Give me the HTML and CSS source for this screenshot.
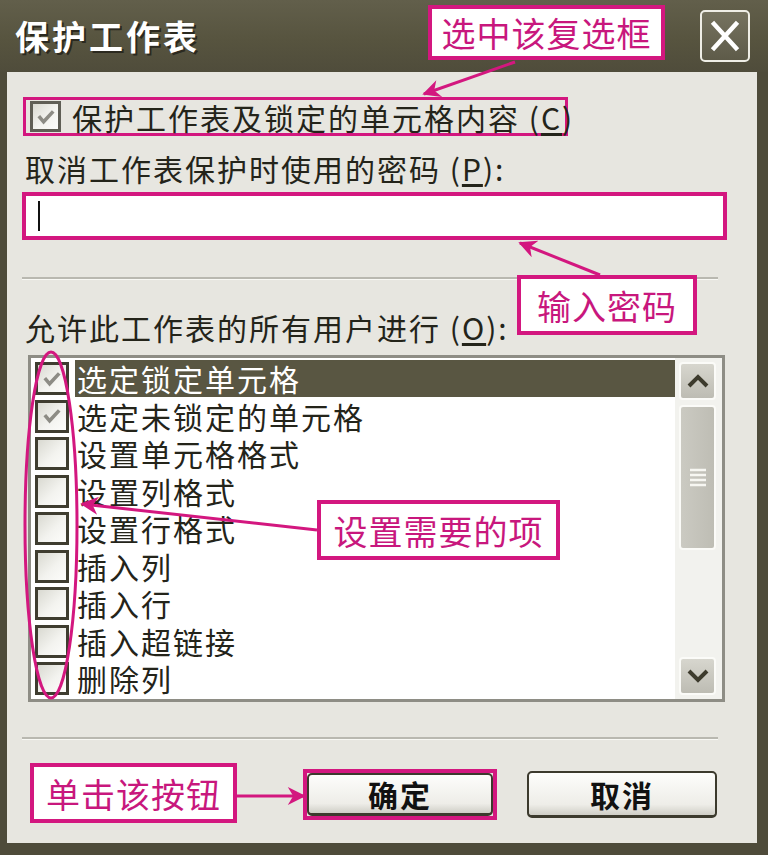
FILE: index.html
```html
<!DOCTYPE html>
<html lang="zh-CN">
<head>
<meta charset="utf-8">
<title>保护工作表</title>
<link rel="stylesheet" href="styles.css">
</head>
<body>
<div class="window">
  <div class="titlebar">
    <span class="title">保护工作表</span>
    <div class="close">
      <svg width="30" height="32" viewBox="0 0 30 32"><path d="M4 4 L26 28 M26 4 L4 28" stroke="#fff" stroke-width="4.5" stroke-linecap="square"/></svg>
    </div>
  </div>
  <div class="frame">
    <div class="body">
      <div class="check-row">
        <span class="cb small checked"><svg viewBox="0 0 30 30"><path d="M6 14 L12 21 L24 8" fill="none" stroke="#8d8c85" stroke-width="4.5"/></svg></span>
        <span class="label">保护工作表及锁定的单元格内容 (<u>C</u>)</span>
      </div>
      <div class="label pw-label">取消工作表保护时使用的密码 (<u>P</u>):</div>
      <div class="input"><span class="caret"></span></div>
      <div class="sep"></div>
      <div class="label allow-label">允许此工作表的所有用户进行 (<u>O</u>):</div>
      <div class="listbox">
        <div class="items">
          <div class="item"><span class="cb checked"><svg viewBox="0 0 30 30"><path d="M6 14 L12 21 L24 8" fill="none" stroke="#8d8c85" stroke-width="4.5"/></svg></span><span class="text sel">选定锁定单元格</span></div>
          <div class="item"><span class="cb checked"><svg viewBox="0 0 30 30"><path d="M6 14 L12 21 L24 8" fill="none" stroke="#8d8c85" stroke-width="4.5"/></svg></span><span class="text">选定未锁定的单元格</span></div>
          <div class="item"><span class="cb"></span><span class="text">设置单元格格式</span></div>
          <div class="item"><span class="cb"></span><span class="text">设置列格式</span></div>
          <div class="item"><span class="cb"></span><span class="text">设置行格式</span></div>
          <div class="item"><span class="cb"></span><span class="text">插入列</span></div>
          <div class="item"><span class="cb"></span><span class="text">插入行</span></div>
          <div class="item"><span class="cb"></span><span class="text">插入超链接</span></div>
          <div class="item"><span class="cb"></span><span class="text">删除列</span></div>
        </div>
        <div class="scrollbar">
          <div class="sb-btn"><svg width="26" height="20" viewBox="0 0 26 20"><path d="M4 15 L13 6 L22 15" fill="none" stroke="#3d3b2d" stroke-width="4"/></svg></div>
          <div class="track">
            <div class="thumb"><svg width="18" height="20" viewBox="0 0 18 20"><path d="M1 2 H17 M1 7 H17 M1 12 H17 M1 17 H17" stroke="#f7f7f2" stroke-width="2.5"/></svg></div>
          </div>
          <div class="sb-btn"><svg width="26" height="20" viewBox="0 0 26 20"><path d="M4 5 L13 14 L22 5" fill="none" stroke="#3d3b2d" stroke-width="4"/></svg></div>
        </div>
      </div>
      <div class="sep sep2"></div>
      <div class="buttons">
        <div class="ok-mark"><div class="btn">确定</div></div>
        <div class="btn cancel">取消</div>
      </div>
    </div>
  </div>

  <div class="callout c1">选中该复选框</div>
  <div class="callout c2">输入密码</div>
  <div class="callout c3">设置需要的项</div>
  <div class="callout c4">单击该按钮</div>

  <svg class="annot" width="768" height="855" viewBox="0 0 768 855">
    <defs>
      <marker id="ah" viewBox="0 0 10 10" refX="9" refY="5" markerWidth="7" markerHeight="6" orient="auto">
        <path d="M0 0 L10 5 L0 10 L3 5 Z" fill="#d3177f"/>
      </marker>
    </defs>
    <g stroke="#d3177f" stroke-width="3" fill="none">
      <line x1="515" y1="62" x2="424" y2="94" marker-end="url(#ah)"/>
      <line x1="600" y1="275" x2="520" y2="243" marker-end="url(#ah)"/>
      <line x1="317" y1="530" x2="82" y2="504" marker-end="url(#ah)"/>
      <line x1="237" y1="796" x2="304" y2="796" marker-end="url(#ah)"/>
      <ellipse cx="51" cy="525" rx="26" ry="173"/>
    </g>
  </svg>
</div>
</body>
</html>
```
FILE: styles.css
```css
* { box-sizing: border-box; }
html, body { margin: 0; padding: 0; }
body {
  width: 768px;
  height: 855px;
  overflow: hidden;
  background: #4e4b3a;
  font-family: "Noto Sans CJK SC", "Noto Sans", sans-serif;
}
.window {
  position: relative;
  width: 768px;
  height: 855px;
  background: #4e4b3a;
  display: flex;
  flex-direction: column;
}
.titlebar {
  height: 72px;
  flex: none;
  display: flex;
  align-items: center;
  justify-content: space-between;
  padding: 0 18px 0 15px;
  background: linear-gradient(#625f4b, #57543f 55%, #4f4c3b);
}
.title {
  color: #fff;
  font-size: 34px;
  font-weight: 700;
  letter-spacing: 3px;
  line-height: 1;
  text-shadow: 2px 2px 0 #2b291f;
}
.close {
  width: 50px;
  height: 52px;
  border: 2px solid #efeee6;
  border-radius: 5px;
  background: linear-gradient(#76735f, #5e5b49);
  display: flex;
  align-items: center;
  justify-content: center;
}
.frame {
  flex: 1;
  display: flex;
  padding: 0 11px 12px 7px;
}
.body {
  flex: 1;
  background: #e7e6e0;
  padding: 0 30px 0 15px;
  display: flex;
  flex-direction: column;
}
.label {
  font-size: 30px;
  line-height: 36px;
  letter-spacing: 2px;
  color: #24241a;
  white-space: nowrap;
}
.label u { text-underline-offset: 3px; }
.check-row {
  margin-top: 25px;
  margin-left: 1px;
  width: 545px;
  height: 39px;
  border: 3px solid #d3177f;
  display: flex;
  align-items: center;
  padding-left: 4px;
  gap: 11px;
}
.cb {
  flex: none;
  width: 34px;
  height: 33px;
  border: 3px solid #3f3d30;
  background: linear-gradient(135deg, #d9d9d1, #f3f3ef 55%, #fdfdfb);
  display: flex;
  align-items: center;
  justify-content: center;
}
.cb svg { width: 24px; height: 24px; }
.cb.small {
  width: 31px;
  height: 31px;
  border-color: #5f5e55;
}
.pw-label { margin-top: 14px; margin-left: 3px; }
.input {
  margin-top: 6px;
  height: 48px;
  border: 4px solid #d3177f;
  background: #fff;
  padding-left: 12px;
  display: flex;
  align-items: center;
}
.caret {
  width: 2px;
  height: 30px;
  background: #111;
}
.sep {
  margin-top: 37px;
  width: 696px;
  height: 3px;
  border-top: 2px solid #b9b8b0;
  border-bottom: 1px solid #f8f8f4;
}
.allow-label { margin-top: 29px; margin-left: 3px; }
.listbox {
  margin-top: 10px;
  margin-left: 6px;
  width: 697px;
  height: 347px;
  border: 3px solid #8e8d85;
  background: #fff;
  display: flex;
}
.items {
  flex: 1;
  padding: 2px 0 0 4px;
}
.item {
  height: 37.5px;
  display: flex;
  align-items: center;
  gap: 6px;
}
.text {
  flex: 1;
  height: 37px;
  line-height: 36px;
  padding-left: 2px;
  font-size: 30px;
  letter-spacing: 2px;
  color: #24241a;
  white-space: nowrap;
}
.text.sel {
  background: #595642;
  color: #fff;
}
.scrollbar {
  flex: none;
  width: 47px;
  padding: 4px 6px 4px 4px;
  background: #f2f2ee;
  display: flex;
  flex-direction: column;
}
.sb-btn {
  height: 38px;
  flex: none;
  border: 2px solid #fbfbf8;
  border-radius: 4px;
  background: linear-gradient(#d7d6ce, #bdbcb3);
  display: flex;
  align-items: center;
  justify-content: center;
}
.track { flex: 1; padding-top: 5px; }
.thumb {
  height: 145px;
  border: 2px solid #fbfbf8;
  border-radius: 4px;
  background: linear-gradient(90deg, #cbcac2, #bebdb4);
  display: flex;
  align-items: center;
  justify-content: center;
}
.sep2 { margin-top: 35px; }
.buttons {
  margin-top: 29px;
  display: flex;
  align-items: center;
}
.ok-mark {
  margin-left: 281px;
  width: 194px;
  height: 51px;
  border: 4px solid #d3177f;
}
.btn {
  width: 100%;
  height: 100%;
  border: 2px solid #3c3a2d;
  border-bottom-width: 3px;
  border-radius: 5px;
  background: linear-gradient(#fdfdfb, #eeede8 75%, #cfcec6);
  display: flex;
  align-items: center;
  justify-content: center;
  font-size: 30px;
  font-weight: 700;
  letter-spacing: 2px;
  color: #111;
}
.btn.cancel {
  margin-left: 30px;
  width: 190px;
  height: 47px;
}
.callout {
  position: absolute;
  background: #fff;
  border: 4px solid #d3177f;
  color: #c8177d;
  font-size: 34px;
  letter-spacing: 1px;
  display: flex;
  align-items: center;
  justify-content: center;
  white-space: nowrap;
  z-index: 2;
}
.c1 { left: 428px; top: 5px; width: 237px; height: 55px; }
.c2 { left: 517px; top: 275px; width: 180px; height: 60px; }
.c3 { left: 317px; top: 500px; width: 243px; height: 60px; }
.c4 { left: 30px; top: 763px; width: 207px; height: 60px; }
.annot {
  position: absolute;
  left: 0;
  top: 0;
  pointer-events: none;
  z-index: 1;
}
```
